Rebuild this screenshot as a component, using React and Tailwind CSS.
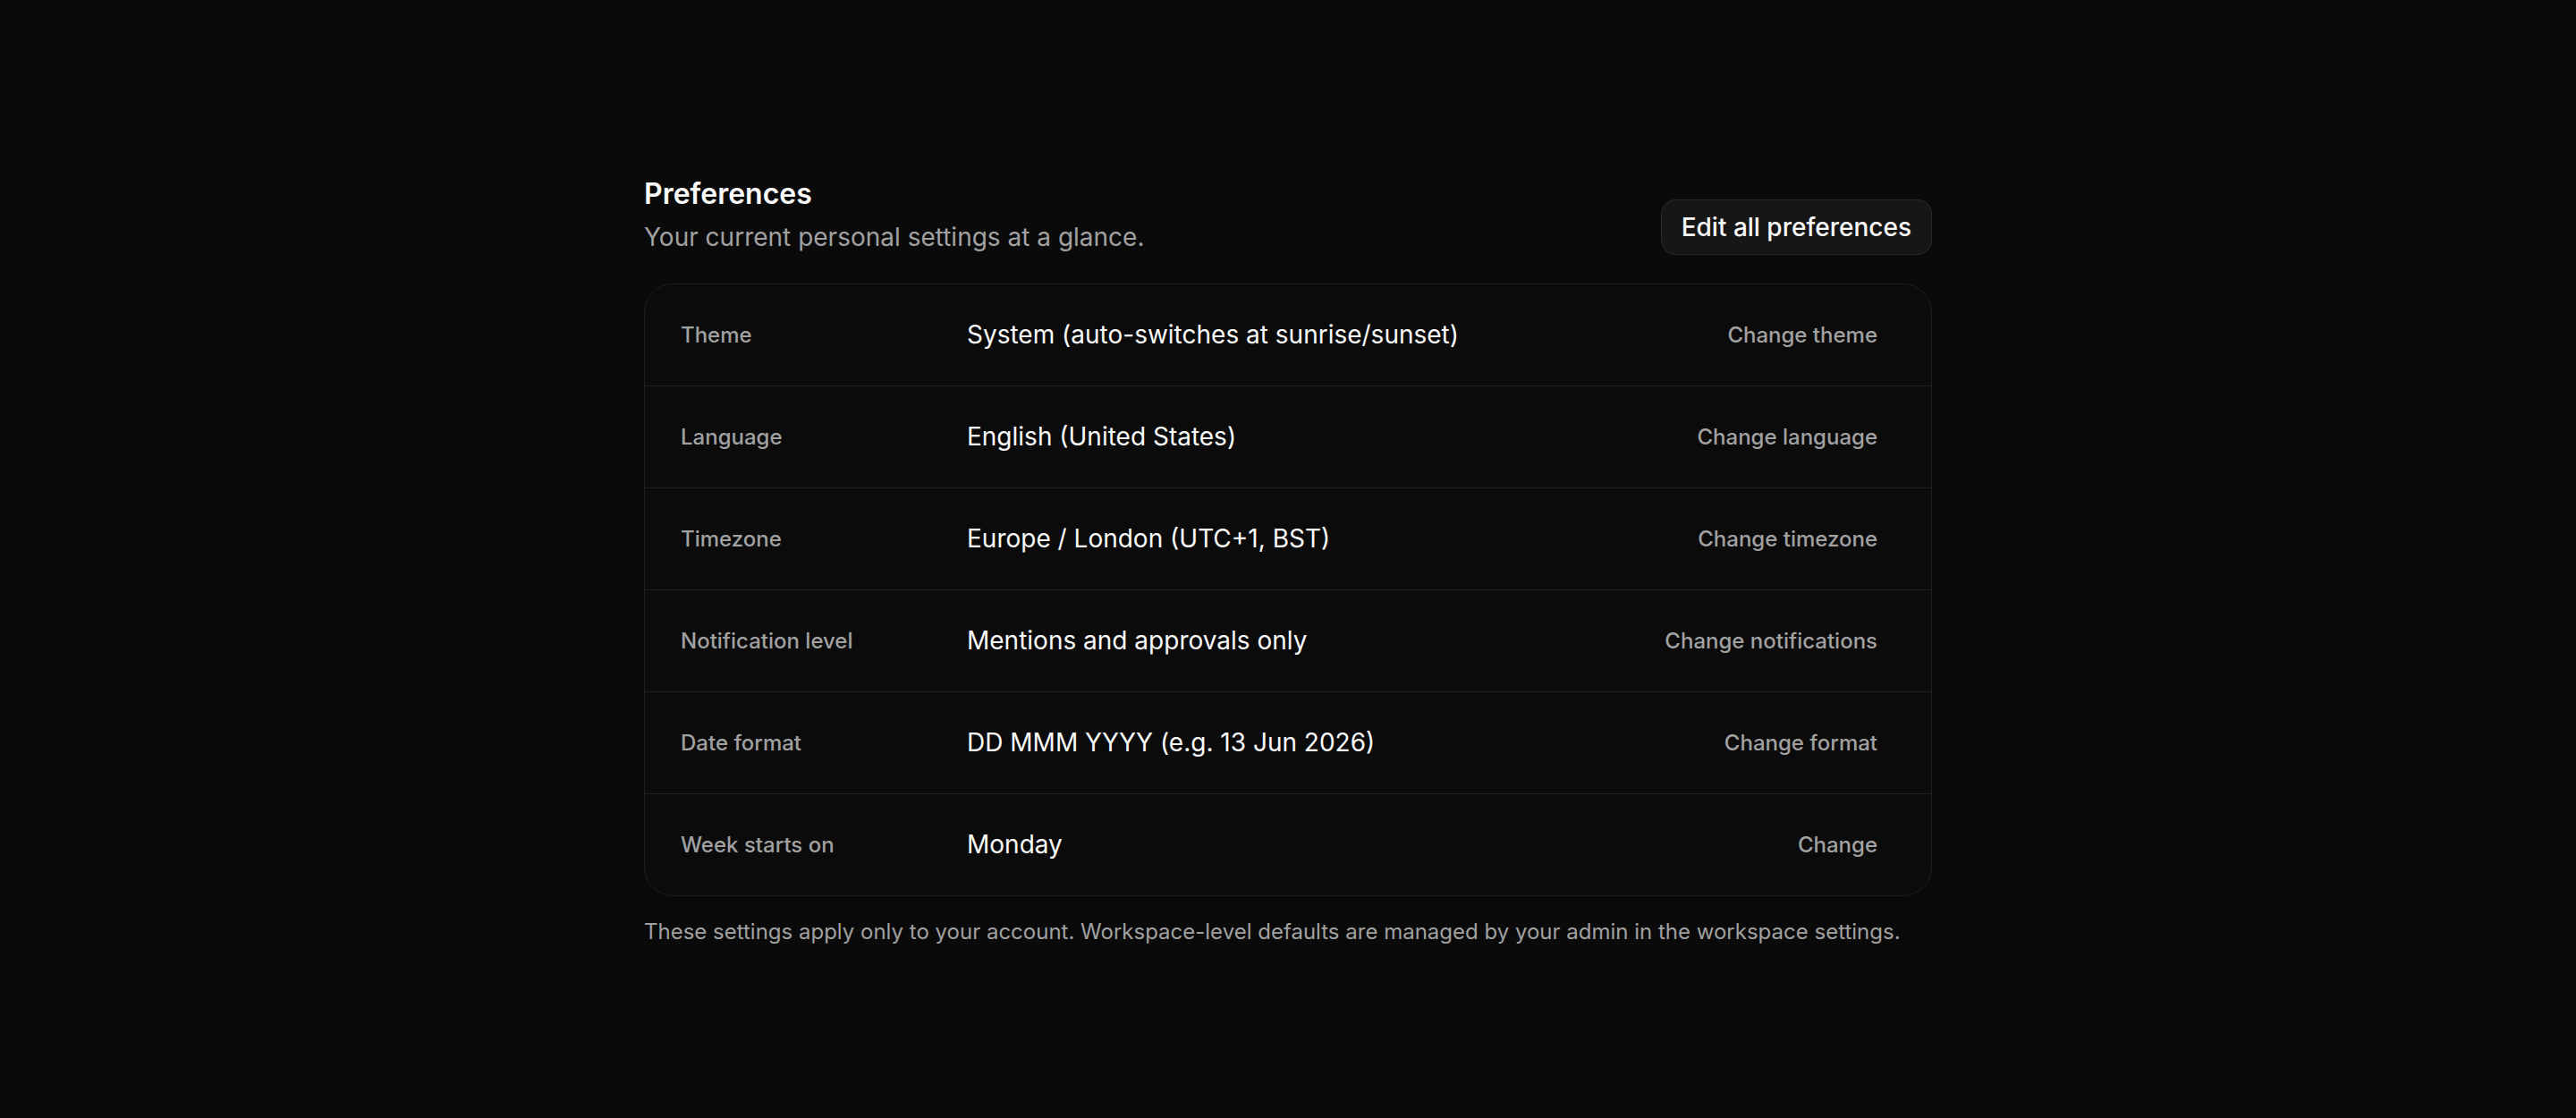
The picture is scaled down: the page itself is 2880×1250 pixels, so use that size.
// Preferences summary card
const rows = [
    { label: "Theme", value: "System (auto-switches at sunrise/sunset)", action: "Change theme" },
    { label: "Language", value: "English (United States)", action: "Change language" },
    { label: "Timezone", value: "Europe / London (UTC+1, BST)", action: "Change timezone" },
    { label: "Notification level", value: "Mentions and approvals only", action: "Change notifications" },
    { label: "Date format", value: "DD MMM YYYY (e.g. 13 Jun 2026)", action: "Change format" },
    { label: "Week starts on", value: "Monday", action: "Change" },
];

function PreferenceRow({ row }) {
    return (
        <div className="flex items-center py-9 pl-10 pr-10">
            <div className="w-80 shrink-0 text-[24px] leading-8 font-medium text-neutral-400">{row.label}</div>
            <div className="flex-1 text-[28px] leading-[41px] text-neutral-50">{row.value}</div>
            <button className="px-5 text-[24px] leading-8 font-medium text-neutral-400 hover:text-neutral-200">
                {row.action}
            </button>
        </div>
    );
}

export default function App() {
    return (
        <div
            className="min-h-screen w-full flex justify-center pt-[197px] bg-[#0a0a0a] text-white"
            style={{ fontFamily: "Inter, 'Noto Sans', sans-serif" }}
        >
            <div className="w-[1440px]">
                <div className="flex items-end justify-between mb-8">
                    <div>
                        <h1 className="text-[32px] leading-10 font-semibold text-neutral-50">Preferences</h1>
                        <p className="mt-2 text-[28px] leading-10 text-neutral-400">Your current personal settings at a glance.</p>
                    </div>
                    <button className="px-[22px] py-2.5 text-[28px] leading-10 font-medium text-neutral-50 bg-[#161616] border border-[#2a2a2a] rounded-2xl">
                        Edit all preferences
                    </button>
                </div>

                <div className="rounded-[32px] border border-[#1f1f1f] bg-[#0b0b0b] divide-y divide-[#1f1f1f] overflow-hidden">
                    {rows.map((row) => (
                        <PreferenceRow key={row.label} row={row} />
                    ))}
                </div>

                <p className="mt-6 text-[24px] leading-8 text-neutral-400">
                    These settings apply only to your account. Workspace-level defaults are managed by your admin in the workspace settings.
                </p>
            </div>
        </div>
    );
}
